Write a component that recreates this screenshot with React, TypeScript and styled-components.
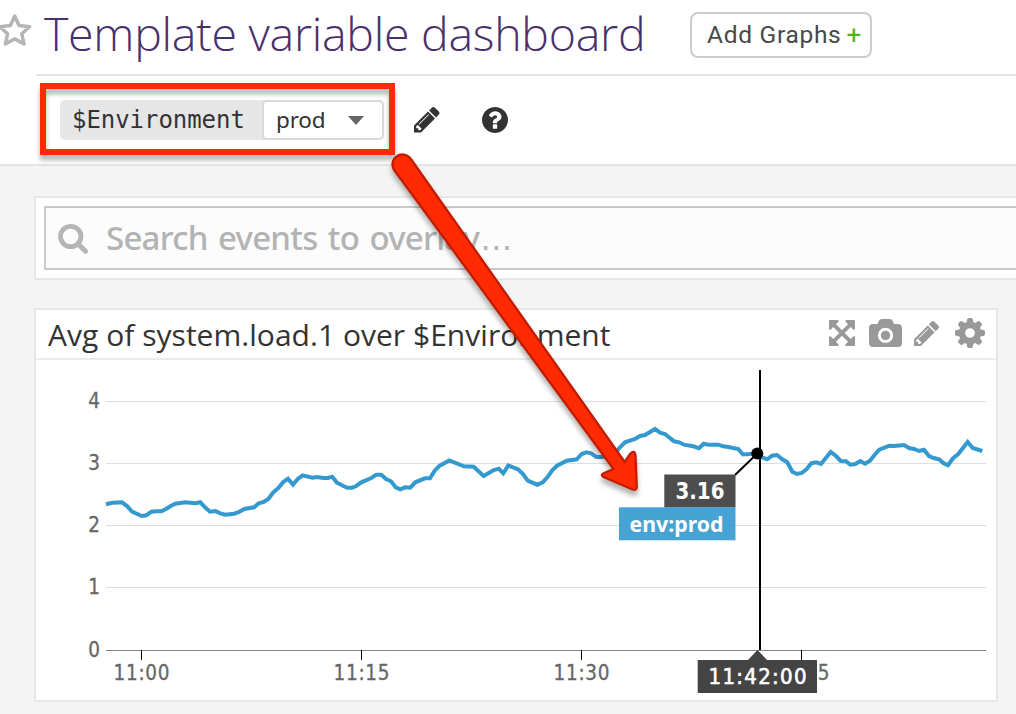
import React from 'react';
import styled, { createGlobalStyle } from 'styled-components';

const GlobalStyle = createGlobalStyle`
  * { box-sizing: border-box; }
  html, body { margin: 0; padding: 0; }
  body {
    background: #f4f4f4;
    font-family: "Open Sans", "Noto Sans", sans-serif;
    overflow: hidden;
  }
  svg { display: block; flex: none; }
`;

const Page = styled.div`
  position: relative;
  width: 1016px;
  height: 714px;
  overflow: hidden;
  background: #f4f4f4;
`;

const Header = styled.header`
  height: 166px;
  background: #fff;
  border-bottom: 2px solid #e4e4e4;
`;

const TitleRow = styled.div`
  display: flex;
  align-items: center;
  height: 74px;
`;

const Title = styled.h1`
  margin: -9px 0 0 11px;
  width: 646px;
  font-weight: 300;
  font-size: 46.5px;
  line-height: 60px;
  letter-spacing: -0.28px;
  color: #4b2f6b;
  white-space: nowrap;
`;

const AddButton = styled.button`
  display: flex;
  align-items: center;
  width: 182px;
  height: 46px;
  margin: -4px 0 0;
  padding: 0 0 2px 15px;
  border: 2px solid #ccc;
  border-radius: 8px;
  background: #fff;
  color: #484848;
  font: 400 24.5px Roboto, sans-serif;
  letter-spacing: 0.7px;
  white-space: nowrap;
`;

const Plus = styled.span`
  margin: 1px 0 0 5px;
  color: #4db31a;
  font-size: 26px;
`;

const Toolbar = styled.div`
  display: flex;
  align-items: center;
  height: 90px;
  margin-left: 36px;
  padding-left: 24px;
  border-top: 2px solid #e5e5e5;
`;

const VariableGroup = styled.div`
  display: flex;
  width: 324px;
  height: 40px;
  margin-right: 30px;
  border-radius: 5px;
  background: #e6e6e6;
`;

const VariableName = styled.div`
  flex: none;
  width: 202px;
  padding-left: 12px;
  font: 24px/40px "DejaVu Sans Mono", monospace;
  letter-spacing: -0.05px;
  color: #333;
`;

const VariableSelect = styled.div`
  display: flex;
  align-items: center;
  justify-content: space-between;
  flex: 1;
  padding: 0 18px 0 12px;
  border: 2px solid #d9d9d9;
  border-radius: 5px;
  background: #fff;
  color: #333;
  font: 22.5px "Noto Sans", sans-serif;
  letter-spacing: -0.2px;
`;

const SelectValue = styled.span`
  margin-top: -2px;
`;

const EditSlot = styled.div`
  color: #333;
`;

const HelpSlot = styled.div`
  margin-left: 42px;
`;

const SearchPanel = styled.section`
  width: 1000px;
  height: 84px;
  margin: 30px 0 28px 34px;
  padding: 8px;
  border: 2px solid #e7e7e7;
  background: #fff;
`;

const SearchField = styled.div`
  display: flex;
  align-items: center;
  width: 1000px;
  height: 64px;
  padding-left: 12px;
  border: 2px solid #c9c9c9;
  background: #fcfcfc;
  color: #b3b3b3;
  font: 500 33px "Noto Sans", sans-serif;
  white-space: nowrap;
`;

const Placeholder = styled.span`
  margin: -2px 0 0 17px;
  letter-spacing: -0.75px;
  word-spacing: 2.5px;
`;

const Ellipsis = styled.span`
  margin-left: 1px;
  font-family: "DejaVu Sans", sans-serif;
  font-size: 32px;
  line-height: 1;
`;

const GraphCard = styled.section`
  width: 964px;
  height: 394px;
  margin-left: 34px;
  border: 2px solid #e7e7e7;
  background: #fff;
`;

const GraphHeader = styled.div`
  display: flex;
  align-items: center;
  justify-content: space-between;
  height: 50px;
  padding: 0 11px 2px 12px;
  border-bottom: 2px solid #ebebeb;
`;

const GraphTitle = styled.h2`
  margin: 4px 0 0;
  font-weight: 400;
  font-size: 30px;
  line-height: 40px;
  letter-spacing: 0.03px;
  color: #333;
  white-space: nowrap;
`;

const GraphActions = styled.div`
  display: flex;
  align-items: center;
  color: #999;
`;

const ActionSlot = styled.div<{ $gap: number }>`
  margin-left: ${(p) => p.$gap}px;
`;

const Annotation = styled.svg`
  position: absolute;
  left: 0;
  top: 0;
  pointer-events: none;
`;

const PENCIL =
  'M491 1536l91-91-235-235-91 91v107h128v128h107zM1014 608q0-22-22-22-10 0-17 7l-542 542q-7 7-7 17 0 22 22 22 10 0 17-7l542-542q7-7 7-17zM960 416l416 416-832 832H128v-416zM1643 512q0 53-37 90l-166 166-416-416 166-165q36-38 90-38 53 0 91 38l235 234q37 39 37 91z';

const HELP =
  'M1024 1376v-192q0-14-9-23t-23-9h-192q-14 0-23 9t-9 23v192q0 14 9 23t23 9h192q14 0 23-9t9-23zm256-672q0-88-55.5-163t-138.5-116-170.5-41q-243 0-371 213-15 24 8 42l132 100q7 6 19 6 16 0 25-12 53-68 86-92 34-24 86-24 48 0 85.500 26t37.500 59q0 38-20 61t-68 45q-63 28-115.500 86.500t-52.500 125.500v36q0 14 9 23t23 9h192q14 0 23-9t9-23q0-19 21.500-49.500t54.500-49.500q32-18 49-28.500t46-35 44.500-48 28-60.500 12.500-81zm384 192q0 209-103 385.500t-279.500 279.500-385.500 103-385.500-103-279.500-279.500-103-385.500 103-385.500 279.500-279.500 385.500-103 385.500 103 279.500 279.500 103 385.500z';

const EXPAND =
  'M1411 541l-355 355 355 355 144-144q29-31 70-14 39 17 39 59v448q0 26-19 45t-45 19h-448q-42 0-59-40-17-39 14-69l144-144-355-355-355 355 144 144q31 30 14 69-17 40-59 40H192q-26 0-45-19t-19-45v-448q0-42 40-59 39-17 69 14l144 144 355-355-355-355-144 144q-19 19-45 19-12 0-24-5-40-17-40-59V192q0-26 19-45t45-19h448q42 0 59 40 17 39-14 69L541 381l355 355 355-355-144-144q-31-30-14-69 17-40 59-40h448q26 0 45 19t19 45v448q0 42-39 59-13 5-25 5-26 0-45-19z';

const PencilIcon = ({ size }: { size: number }) => (
  <svg width={size} height={size} viewBox="128 149 1515 1515" fill="currentColor">
    <path d={PENCIL} />
  </svg>
);

const StarIcon = () => (
  <svg width="33" height="74" viewBox="0 0 33 74">
    <path
      d="M14.7 16 L19 25.500 L29.600 26.800 L21.800 33.800 L24 44 L14.700 38.900 L5.400 44 L7.600 33.800 L-0.200 26.800 L10.400 25.500 Z"
      fill="none"
      stroke="#b5b5b5"
      strokeWidth="3.5"
      strokeLinejoin="round"
    />
  </svg>
);

const SearchIcon = () => (
  <svg width="31" height="31" viewBox="58 222 31 31" fill="none" stroke="#b5b5b5">
    <circle cx="70.700" cy="235.500" r="10.200" strokeWidth="4.800" />
    <path d="M78.200 243 L85.500 250.200" strokeWidth="5" strokeLinecap="round" />
  </svg>
);

const CameraIcon = () => (
  <svg width="33" height="28" viewBox="0 0 33 28">
    <path
      fill="currentColor"
      fillRule="evenodd"
      d="M4 5H8.500L9.600 2.200Q10.500 0 13 0H20.500Q23 0 23.900 2.200L25 5H29Q33 5 33 9V24Q33 28 29 28H4Q0 28 0 24V9Q0 5 4 5ZM16.500 8.700A7.700 7.700 0 1 0 16.500 24.100A7.700 7.700 0 1 0 16.500 8.700ZM16.500 11.700A4.700 4.700 0 1 1 16.500 21.100A4.700 4.700 0 1 1 16.500 11.700Z"
    />
  </svg>
);

const GearIcon = () => (
  <svg width="30" height="30" viewBox="-15 -15 30 30" fill="currentColor">
    {[0, 45, 90, 135].map((angle) => (
      <g key={angle} transform={`rotate(${angle})`}>
        <path d="M-3.700 -9 L-2.900 -13.500 Q-2.700 -15 -1.300 -15 H1.300 Q2.700 -15 2.900 -13.500 L3.700 -9 Z" />
        <path d="M-3.700 9 L-2.900 13.500 Q-2.700 15 -1.300 15 H1.300 Q2.700 15 2.900 13.500 L3.700 9 Z" />
      </g>
    ))}
    <circle r="8" fill="none" stroke="currentColor" strokeWidth="6.300" />
  </svg>
);

const SERIES =
  '106,504.300 112.300,502.700 122,502.300 127.300,506.300 132,511.700 141.700,516 146.300,515.300 151.300,511.700 155.700,511.300 161.300,511.300 166,509 170.700,506 175.300,503.700 185.300,502.300 195.300,503.300 200.300,502.300 205,507.300 210,511.700 215.300,511 220.300,513.300 225,514.700 234.300,513.700 239,512 244.300,509 254,507.300 258.700,503.300 263.700,502 268.300,499 273.300,492.300 278.300,488 283.300,482 288,478.700 293,484.700 297.700,479 302.700,475.300 312.300,477.700 317.300,477 323.300,478 328,478 332.300,476.700 337,482.700 347,487.700 352,487.700 355.700,486.300 361.300,482.300 371.300,478 376.300,474.700 381.300,474.700 386,479 391,481.300 395.700,487.300 400.300,489.300 405.300,487.300 410.300,487.700 415.300,482.300 425,478.300 430,478.300 434.700,470.700 439.700,465.700 449.300,460.500 464,466.300 473.700,466.700 483.700,476 493.300,470.300 498.700,468.700 503.300,473.300 508.300,465.500 518,469.300 523,474 527.700,480.700 537.300,484.700 542.700,482.300 547.300,477.300 552.300,470.300 557,465.700 566.700,460.700 576.700,459.300 581.700,454 586.300,452.300 591.300,453.300 596.300,457 601.700,457 610,455 615,453.300 620,447.300 625,442.300 635,439 640,436 645,435 655,429 660,432.700 665,434 674,441.300 679.300,442.300 684,444.700 693.300,446.300 699,448.300 703.700,443.700 708.300,444.700 718.300,444.700 723.300,446.300 728.300,447 738.300,449 743,454.500 753.300,453.700 757.300,453.500 762,457.300 767.300,459.300 772,455.700 777,455 782.300,459.300 787.300,462.300 792.300,471.700 797,474 801.700,473 806.700,469 811.300,463.300 816,462.300 821,464 830.700,452 835.300,455.300 840.700,461 846,461.300 850.300,464.700 855.300,464 860.300,461 865,463.700 870,460.700 874.700,454.700 879.300,449.700 889.300,445.700 894,446 904,445 909,448 914,449 919,451 924,449.700 929,456 933.700,458 939,459.300 943.700,463.300 948,465.300 953.300,458 958,454.300 967.700,442 972.700,448 982.300,451';

const AXIS_FONT = '"DejaVu Sans Condensed", "DejaVu Sans", sans-serif';
const yTicks = [
  { value: 4, y: 401.300 },
  { value: 3, y: 463.400 },
  { value: 2, y: 525.500 },
  { value: 1, y: 587.600 },
  { value: 0, y: 650 },
];
const xTicks = [
  { label: '11:00', x: 141.500 },
  { label: '11:15', x: 361.500 },
  { label: '11:30', x: 581.500 },
  { label: '11:45', x: 801.500 },
];

const Chart = () => (
  <svg width="960" height="340" viewBox="36 360 960 340" fontFamily={AXIS_FONT}>
    {yTicks.map(({ value, y }) => (
      <React.Fragment key={value}>
        {value > 0 && <path d={`M106 ${Math.floor(y) + 0.5}H986`} stroke="#dedede" />}
        <text x="100" y={y + 6.500} fontSize="20.500" textAnchor="end" fill="#666" stroke="#666" strokeWidth="0.300">
          {value}
        </text>
      </React.Fragment>
    ))}
    <path d="M106 650.500H986" stroke="#888" />
    {xTicks.map(({ label, x }) => (
      <React.Fragment key={label}>
        <path d={`M${x} 650V660`} stroke="#000" />
        <text x={x - 28} y="680" fontSize="20.500" textLength="56" fill="#666" stroke="#666" strokeWidth="0.300">
          {label}
        </text>
      </React.Fragment>
    ))}
    <polyline points={SERIES} fill="none" stroke="#3399cf" strokeWidth="4" />
    <path d="M760 370V650" stroke="#000" strokeWidth="2" />
    <path d="M757.300 453.500L735 475" stroke="#000" strokeWidth="2" />
    <circle cx="757.300" cy="453.500" r="6" />
    <rect x="664.300" y="474.500" width="71.200" height="33" fill="#4d4d4d" />
    <text x="675.500" y="499" fontSize="22.500" fontWeight="700" textLength="49" lengthAdjust="spacingAndGlyphs" fill="#fff">
      3.16
    </text>
    <rect x="619" y="507.300" width="116.500" height="33" fill="#3399cf" fillOpacity="0.9" />
    <text x="629.500" y="532" fontSize="22" fontWeight="700" fontFamily='"Noto Sans", sans-serif' textLength="94" lengthAdjust="spacingAndGlyphs" fill="#fff">
      env:prod
    </text>
    <path d="M697.700 660H748L757.500 650L767 660H817V693H697.700Z" fill="#444" />
    <text x="708.500" y="684" fontSize="22" textLength="98" fill="#fff" stroke="#fff" strokeWidth="0.600">
      11:42:00
    </text>
  </svg>
);

const Callout = () => (
  <Annotation width="1016" height="714" viewBox="0 0 1016 714">
    <defs>
      <filter id="lift" filterUnits="userSpaceOnUse" x="0" y="50" width="700" height="480">
        <feDropShadow dx="0" dy="5" stdDeviation="2.500" floodColor="#000" floodOpacity="0.300" />
      </filter>
    </defs>
    <rect x="43" y="86" width="349" height="66" fill="none" stroke="#ff2a00" strokeWidth="6" filter="url(#lift)" />
    <path
      d="M394.500 170.500A9.800 9.800 0 0 1 410.500 158.500L624.700 462L630.500 453.500Q634.500 449.500 635.500 455L636.800 487Q636.800 491 632.500 489.500L603.500 477Q600 474.500 604 473L613.500 469Z"
      fill="#ff2a00"
      stroke="#c21f00"
      strokeWidth="2.300"
      strokeLinejoin="round"
      filter="url(#lift)"
    />
  </Annotation>
);

export default function App() {
  return (
    <Page>
      <GlobalStyle />
      <Header>
        <TitleRow>
          <StarIcon />
          <Title>Template variable dashboard</Title>
          <AddButton>
            Add Graphs<Plus>+</Plus>
          </AddButton>
        </TitleRow>
        <Toolbar>
          <VariableGroup>
            <VariableName>$Environment</VariableName>
            <VariableSelect>
              <SelectValue>prod</SelectValue>
              <svg width="16" height="9" viewBox="0 0 16 9">
                <path d="M0 0H16L8 9Z" fill="#666" />
              </svg>
            </VariableSelect>
          </VariableGroup>
          <EditSlot>
            <PencilIcon size={25.5} />
          </EditSlot>
          <HelpSlot>
            <svg width="26" height="26" viewBox="128 128 1536 1536" fill="#333">
              <path d={HELP} />
            </svg>
          </HelpSlot>
        </Toolbar>
      </Header>
      <SearchPanel>
        <SearchField>
          <SearchIcon />
          <Placeholder>
            Search events to overlay<Ellipsis>…</Ellipsis>
          </Placeholder>
        </SearchField>
      </SearchPanel>
      <GraphCard>
        <GraphHeader>
          <GraphTitle>Avg of system.load.1 over $Environment</GraphTitle>
          <GraphActions>
            <svg width="26" height="26" viewBox="128 128 1536 1536" fill="currentColor">
              <path d={EXPAND} />
            </svg>
            <ActionSlot $gap={14}>
              <CameraIcon />
            </ActionSlot>
            <ActionSlot $gap={12}>
              <PencilIcon size={25} />
            </ActionSlot>
            <ActionSlot $gap={16}>
              <GearIcon />
            </ActionSlot>
          </GraphActions>
        </GraphHeader>
        <Chart />
      </GraphCard>
      <Callout />
    </Page>
  );
}
